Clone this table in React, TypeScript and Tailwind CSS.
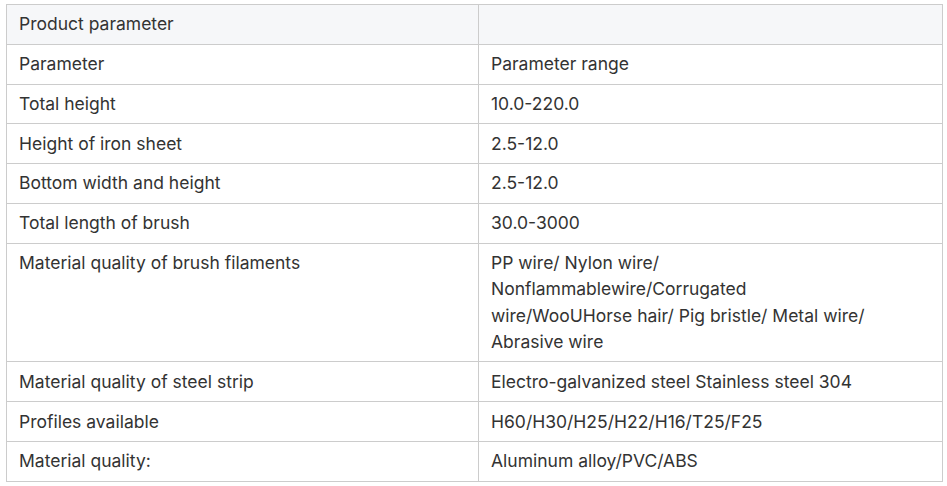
const rows: [string, string][] = [
  ["Parameter", "Parameter range"],
  ["Total height", "10.0-220.0"],
  ["Height of iron sheet", "2.5-12.0"],
  ["Bottom width and height", "2.5-12.0"],
  ["Total length of brush", "30.0-3000"],
  [
    "Material quality of brush filaments",
    "PP wire/ Nylon wire/ Nonflammablewire/Corrugated wire/WooUHorse hair/ Pig bristle/ Metal wire/ Abrasive wire",
  ],
  ["Material quality of steel strip", "Electro-galvanized steel Stainless steel 304"],
  ["Profiles available", "H60/H30/H25/H22/H16/T25/F25"],
  ["Material quality:", "Aluminum alloy/PVC/ABS"],
];

export default function App() {
  return (
    <div className="bg-white pl-[6px] pt-[4px] font-['Inter','Liberation_Sans',sans-serif] text-[17.5px] leading-[26.3px] text-[#333]">
      <table className="w-[937px] table-fixed border-collapse">
        <colgroup>
          <col className="w-[472px]" />
          <col />
        </colgroup>
        <tbody>
          <tr className="bg-[#f6f7f9]">
            <td className="border border-[#cccccc] px-3 py-[6.25px] align-top">Product parameter</td>
            <td className="border border-[#cccccc] px-3 py-[6.25px] align-top"></td>
          </tr>
          {rows.map(([k, v]) => (
            <tr key={k}>
              <td className="border border-[#cccccc] px-3 py-[6.25px] align-top">{k}</td>
              <td className="border border-[#cccccc] pl-3 pr-[67px] py-[6.25px] align-top">{v}</td>
            </tr>
          ))}
        </tbody>
      </table>
    </div>
  );
}
